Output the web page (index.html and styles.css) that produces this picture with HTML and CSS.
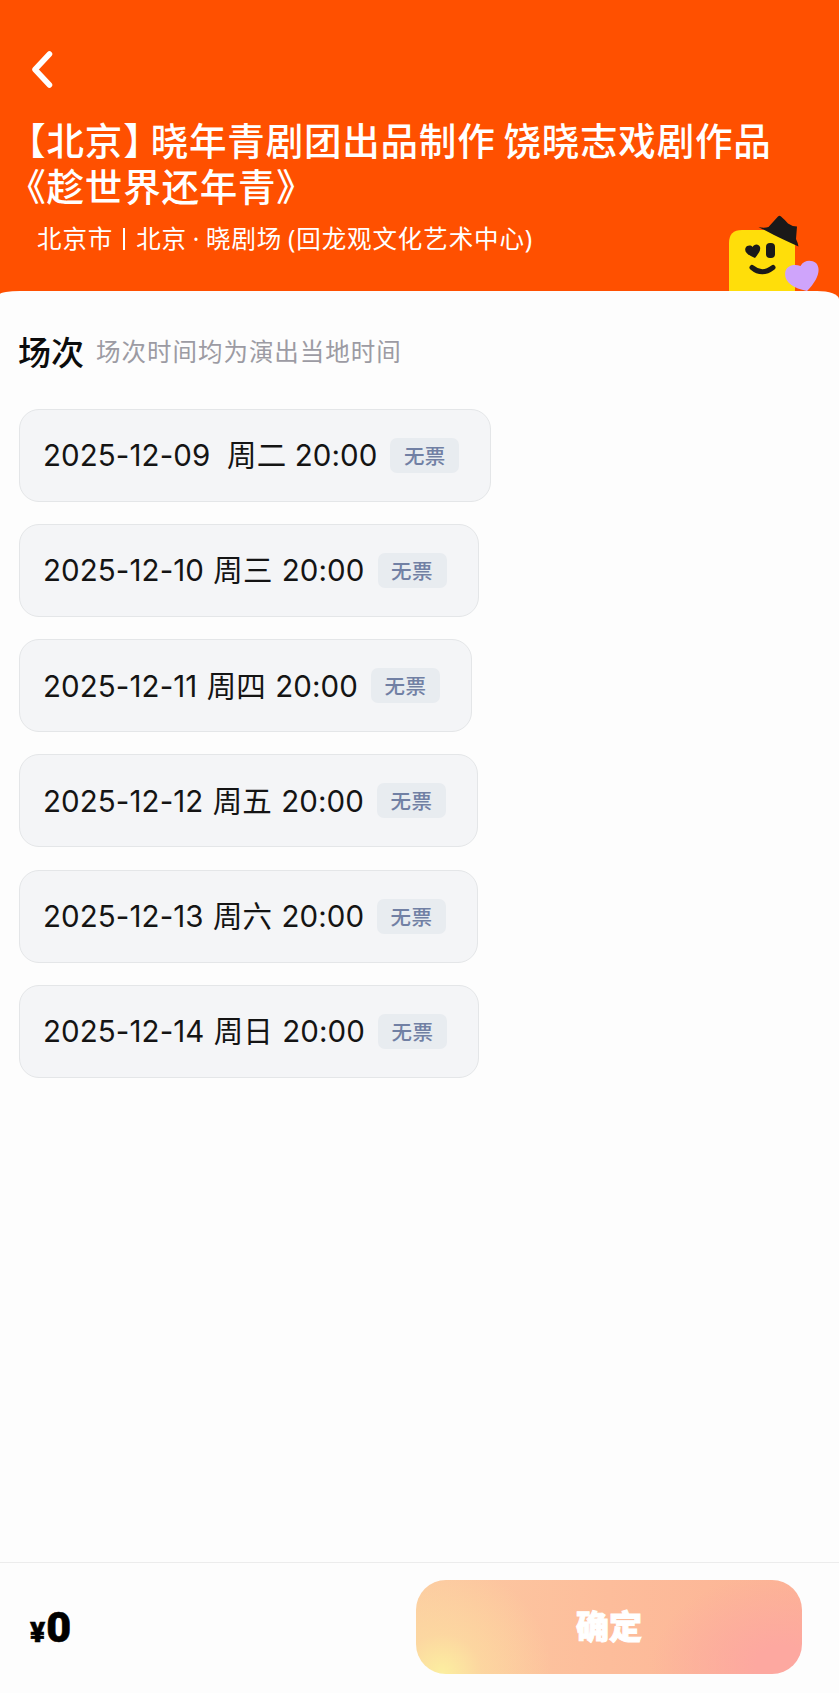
FILE: index.html
```html
<!DOCTYPE html>
<html lang="zh-CN">
<head>
    <meta charset="UTF-8">
    <meta name="viewport" content="width=device-width, initial-scale=1.0">
    <title>选择场次</title>
    <link rel="stylesheet" href="styles.css">
</head>
<body>
    <div class="page">
        <header class="header">
            <button class="back" aria-label="返回">
                <svg width="22" height="38" viewBox="0 0 22 38">
                    <path d="M18.500 4 L4 19.500 L18.500 35" fill="none" stroke="#fff" stroke-width="5.500" stroke-linecap="round" stroke-linejoin="round"/>
                </svg>
            </button>
            <h1 class="title">【北京】 晓年青剧团出品制作 饶晓志戏剧作品<br>《趁世界还年青》</h1>
            <p class="venue">北京市<span class="line"></span>北京 · 晓剧场 (回龙观文化艺术中心)</p>
            <svg class="mascot" width="94" height="77" viewBox="0 0 94 77">
                <path d="M2 77 V29 Q2 16 15 16 H56 Q68 16 68 28 V77 Z" fill="#ffde0a"/>
                <path d="M31.500 13 Q37 14.500 41.500 13 L51 2.500 Q52.500 1 54 2.500 Q57 5 61 9.500 Q65 12.500 70 12.500 L69 25 Q71 29 71.500 32.500 Q55 25 47 21 Q39 17 31.500 13 Z" fill="#1a1919"/>
                <path d="M28 44 C21 41 17 38 18.500 34 C20 31 24 31 25.500 33 C27 29.500 32 29.500 33 33 C34 37 31 40 28 44 Z" fill="#1a1919"/>
                <rect x="39" y="29" width="9" height="15" rx="4" fill="#1a1919"/>
                <path d="M25 53.500 Q35 62 46 53.500" fill="none" stroke="#1a1919" stroke-width="5" stroke-linecap="round"/>
                <path d="M80 77 C65 74 56 67 58.500 57 C60.500 51 68 50 73.500 52 C77 46 84 45.500 89 49 C94.500 55 91 66 80 77 Z" fill="#cfa4fb"/>
            </svg>
        </header>

        <main class="panel">
            <div class="panel-head">
                <h2>场次</h2>
                <span class="hint">场次时间均为演出当地时间</span>
            </div>
            <ul class="sessions">
                <li class="session"><span class="date double">2025-12-09&nbsp; 周二 20:00</span><span class="tag">无票</span></li>
                <li class="session"><span class="date">2025-12-10 周三 20:00</span><span class="tag">无票</span></li>
                <li class="session"><span class="date">2025-12-11 周四 20:00</span><span class="tag">无票</span></li>
                <li class="session"><span class="date">2025-12-12 周五 20:00</span><span class="tag">无票</span></li>
                <li class="session"><span class="date">2025-12-13 周六 20:00</span><span class="tag">无票</span></li>
                <li class="session"><span class="date">2025-12-14 周日 20:00</span><span class="tag">无票</span></li>
            </ul>
        </main>

        <footer class="footer">
            <div class="price"><span class="unit">¥</span>0</div>
            <button class="confirm">确定</button>
        </footer>
    </div>
</body>
</html>
```
FILE: styles.css
```css
* {
    box-sizing: border-box;
    margin: 0;
    padding: 0;
}
body {
    font-family: "Noto Sans CJK SC", sans-serif;
    background: #ff5000;
}
button {
    border: none;
    background: none;
    font-family: inherit;
    cursor: pointer;
}
.page {
    display: flex;
    flex-direction: column;
    height: 1693px;
}
.header {
    position: relative;
    height: 291px;
    padding: 50px 28px 0;
    color: #fff;
}
.back {
    display: block;
    width: 26px;
    height: 38px;
    padding-left: 2px;
}
.title {
    margin: 28px 0 0 -1px;
    font-size: 37.500px;
    line-height: 45.500px;
    font-weight: 500;
    letter-spacing: 0.800px;
    word-spacing: -1.200px;
    font-feature-settings: "halt";
    white-space: nowrap;
}
.venue {
    display: flex;
    align-items: center;
    margin: 12px 0 0 9px;
    font-family: "Noto Sans", "Noto Sans CJK SC", sans-serif;
    font-size: 24.500px;
    line-height: 40px;
    letter-spacing: 0.900px;
    word-spacing: -1.500px;
    white-space: pre;
}
.line {
    width: 2px;
    height: 22px;
    margin: 0 11px 0 10px;
    background: #fff;
}
.mascot {
    position: absolute;
    left: 727px;
    bottom: 0;
}
.panel {
    flex: 1;
    padding: 34px 19px 0 18px;
    background: #fdfdfd;
    border-radius: 20px 22px 0 0 / 3px 8px 0 0;
}
.panel-head {
    display: flex;
    align-items: center;
    height: 51px;
}
h2 {
    font-size: 33px;
    font-weight: 500;
    color: #0c0c0c;
}
.hint {
    margin-left: 12px;
    font-size: 24.500px;
    letter-spacing: 0.980px;
    color: #9c9ba3;
}
.sessions {
    display: flex;
    flex-direction: column;
    align-items: flex-start;
    gap: 22.300px;
    margin: 32.500px 0 0 1px;
    list-style: none;
}
.session {
    display: flex;
    align-items: center;
    height: 93px;
    padding: 0 31px 0 23px;
    background: #f4f5f7;
    border: 1px solid #e4e6e8;
    border-radius: 20px;
}
.date {
    margin-top: -4px;
    font-family: Inter, "Noto Sans CJK SC", sans-serif;
    font-size: 29.500px;
    letter-spacing: 0.080px;
    word-spacing: 0.900px;
    color: #141414;
    white-space: nowrap;
}
.double {
    word-spacing: 0;
}
.tag {
    width: 69px;
    height: 35px;
    margin-left: 13px;
    border-radius: 7px;
    background: #e8ecf0;
    color: #7180a4;
    font-size: 20.500px;
    font-weight: 500;
    line-height: 35px;
    letter-spacing: 0.500px;
    text-align: center;
}
.footer {
    display: flex;
    align-items: center;
    justify-content: space-between;
    height: 131px;
    padding: 0 37px 2px 30px;
    background: #fdfdfd;
    border-top: 1px solid #ececec;
}
.price {
    font-family: Roboto, "Noto Sans CJK SC", sans-serif;
    font-size: 43px;
    font-weight: 900;
    color: #000;
    -webkit-text-stroke: 0.6px #000;
}
.unit {
    margin-right: 1px;
    font-size: 28px;
}
.confirm {
    width: 386px;
    height: 94px;
    padding-bottom: 4px;
    border-radius: 30px;
    background: radial-gradient(circle at 26px 94px, #fcefa0 0, rgba(252, 224, 160, .6) 40px, rgba(252, 208, 165, 0) 110px),
        radial-gradient(ellipse 130px 90px at 366px 84px, #fda8a0 0, #fda8a0 20%, rgba(253, 170, 155, 0) 100%),
        linear-gradient(90deg, #fccaa2, #fdbd9b 50%, #fcb395);
    color: #fff;
    font-size: 33px;
    font-weight: 900;
    -webkit-text-stroke: 1px #fff;
}
```
